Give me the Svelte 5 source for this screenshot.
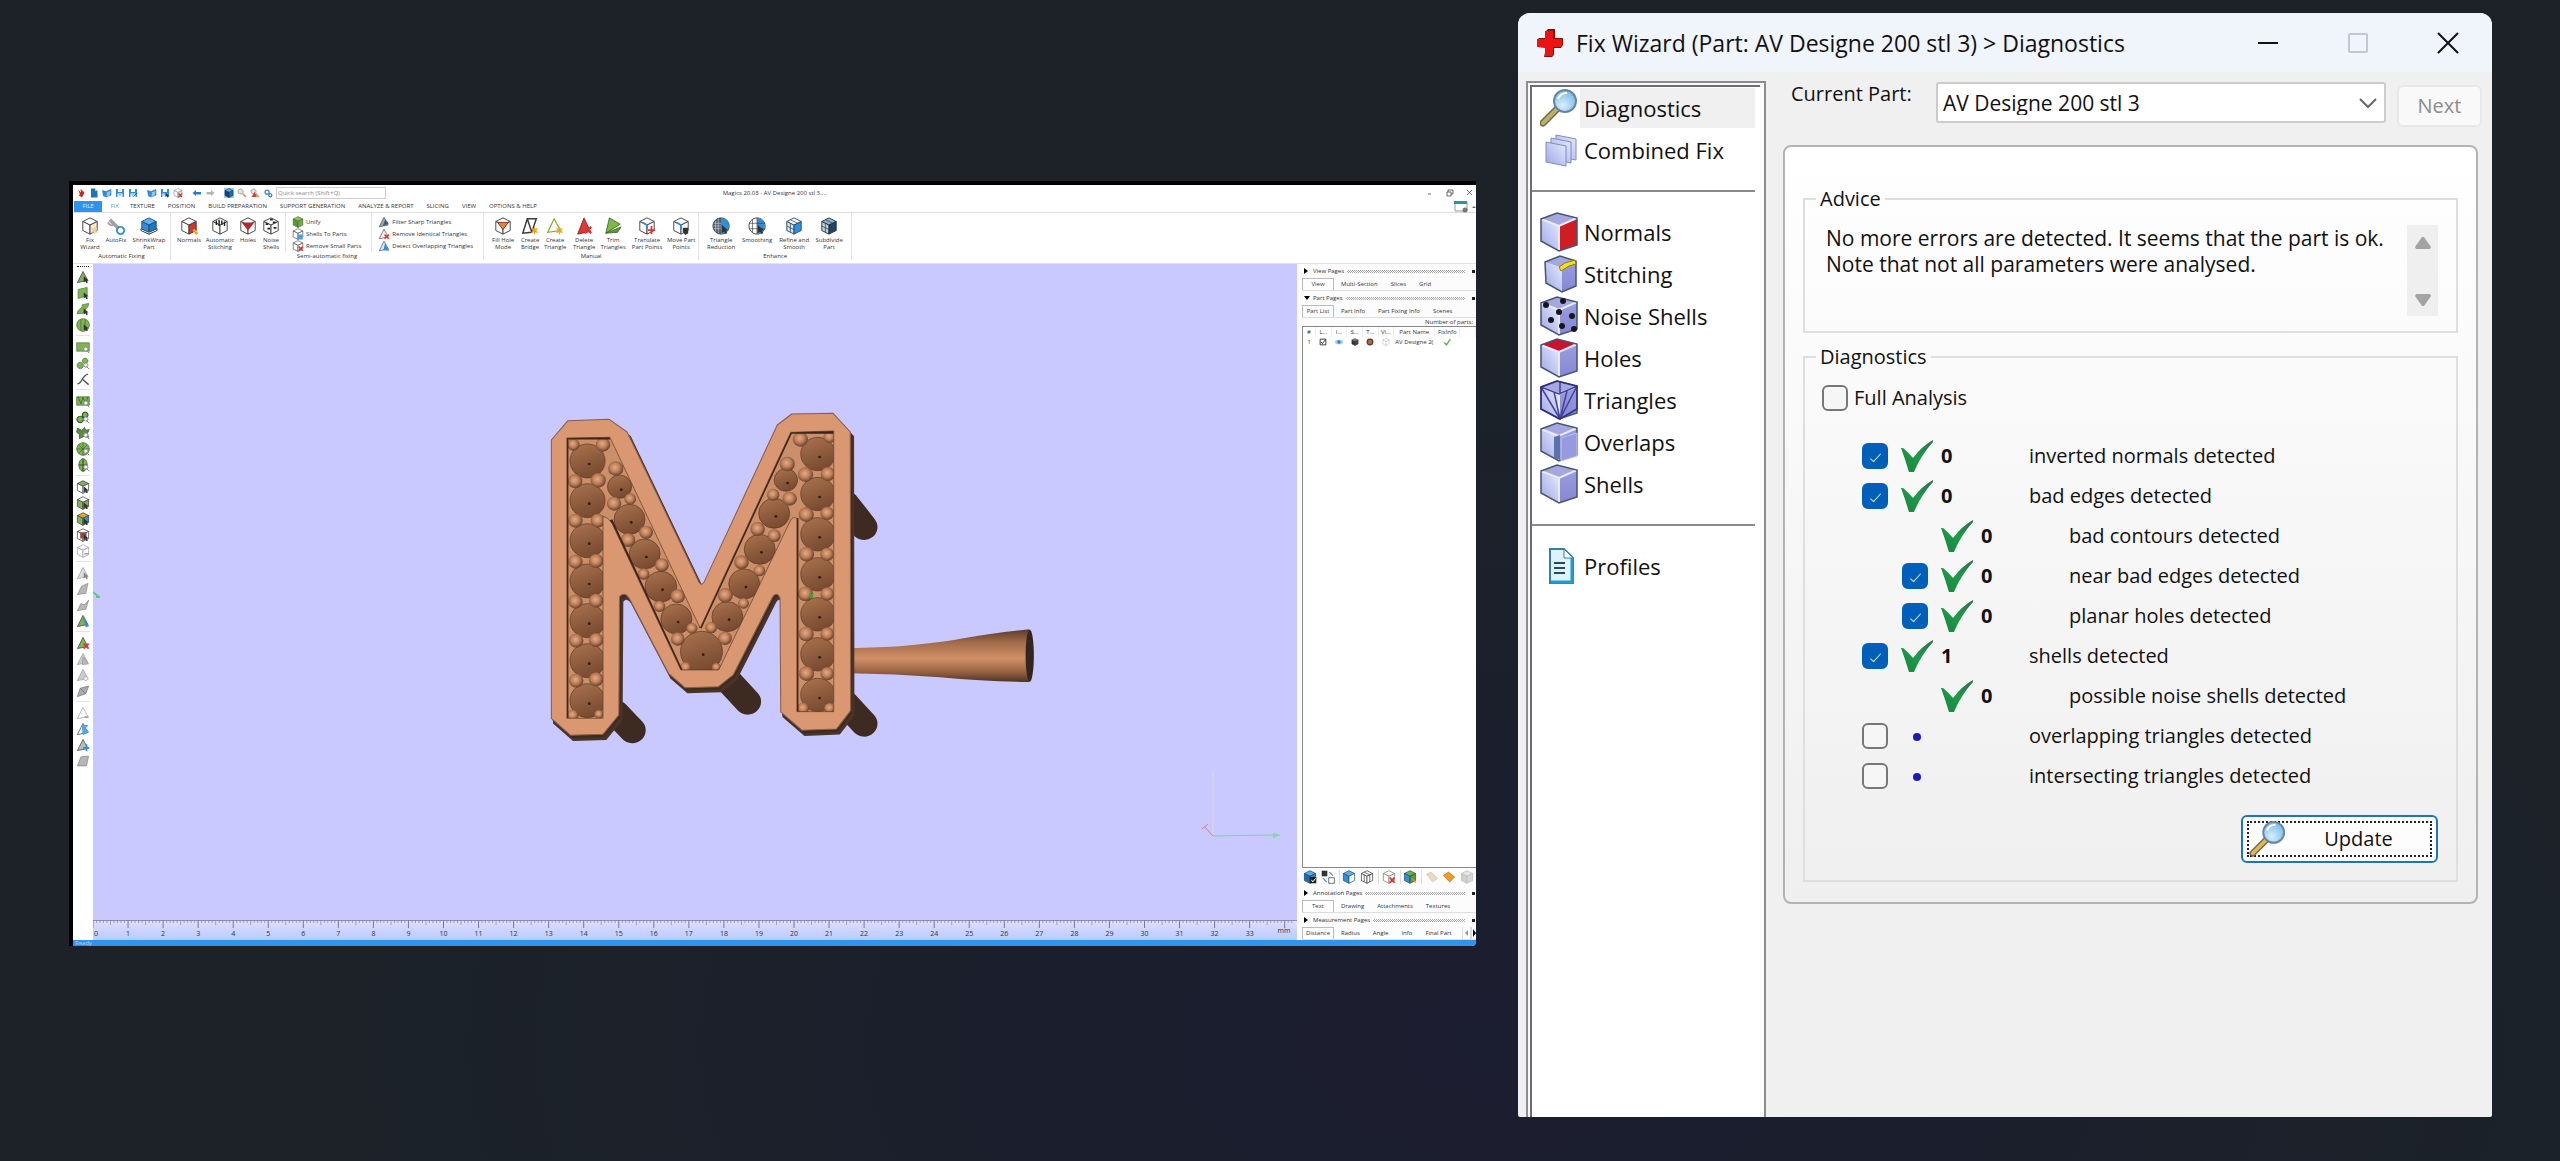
<script lang="ts">
  type Shape = { d: string; f?: string; s?: string; w?: number };
  type Icon = Shape[];

  const INK = '#3a3a3a';
  const GREEN = '#7fb356';
  const BLUE = '#2f8fdc';
  const RED = '#e0352f';
  const GREY = '#b8b8b8';

  function cube(top: string, left: string, right: string, s = INK): Icon {
    return [
      { d: 'M2 5L10 1L18 5L10 9Z', f: top, s },
      { d: 'M2 5V15L10 19V9Z', f: left, s },
      { d: 'M18 5V15L10 19V9Z', f: right, s },
    ];
  }

  function tri(f: string, s = INK): Icon {
    return [{ d: 'M10 2L2 18L17 15Z', f, s }];
  }

  const cursor: Icon = [{ d: 'M11 9V18L13.500 16L15 19L17 18L15.500 15H18Z', f: '#333' }];
  const lens: Icon = [
    { d: 'M14 10A3 3 0 1 0 14.100 10M15 15L19 19', f: '#f4f4f4', s: '#888', w: 1.4 },
  ];
  const cross: Icon = [{ d: 'M11 11L18 18M18 11L11 18', s: RED, w: 2.6 }];
  const star: Icon = [
    { d: 'M15 10L16 13L19 12L17 15L19 18L16 17L15 20L14 17L11 18L13 15L11 12L14 13Z', f: '#f2a51c' },
  ];
  const disk: Icon = [
    { d: 'M2 2H18V18H2Z', f: BLUE },
    { d: 'M6 2H14V8H6ZM5 11H15V18H5Z', f: '#fff' },
    { d: 'M7 13H13M7 15.500H13', s: BLUE },
  ];
  const folder: Icon = [
    { d: 'M1 5L8 7L18 3V14L9 18L3 16Z', f: BLUE, s: '#1b5e9c' },
    { d: 'M10 8L18 6L15 15L9 18Z', f: '#8cc6f2' },
  ];
  const magnifier: Icon = [
    { d: 'M7 2A5 5 0 1 0 7.100 2', f: '#e3e3e3', s: '#8b8b8b', w: 1.6 },
    { d: 'M11 11L18 18', s: '#c89a55', w: 3 },
  ];

  const quickIcons: { icon: Icon; gap?: boolean; on?: boolean }[] = [
    { icon: [{ d: 'M4 3L10 9L9 2L17 9L12 19L5 14L8 13Z', f: '#c62620' }] },
    {
      icon: [
        { d: 'M4 1H12L17 6V19H4Z', f: '#1d74bd' },
        { d: 'M12 1V6H17Z', f: '#a9d3f2' },
      ],
    },
    { icon: folder },
    { icon: disk },
    { icon: [...disk, { d: 'M11 17L18 10', s: '#1b5e9c', w: 2 }] },
    { icon: folder, gap: true },
    { icon: [...disk, ...cursor] },
    { icon: [...cube('#fff', '#fff', '#ddd', '#777'), ...cross] },
    { icon: [{ d: 'M1 10L8 4V8H18V13H8V16Z', f: '#2c7cc4' }], gap: true },
    { icon: [{ d: 'M19 10L12 4V8H3V13H12V16Z', f: '#b3b3b3' }] },
    { icon: [...cube('#54aeea', '#17456e', '#1f6db0', '#0f3252')], gap: true, on: true },
    { icon: magnifier },
    { icon: [...magnifier, { d: 'M3 18L9 8L14 18Z', f: '#d63b34' }] },
  ];

  const tabs = [
    'TEXTURE',
    'POSITION',
    'BUILD PREPARATION',
    'SUPPORT GENERATION',
    'ANALYZE & REPORT',
    'SLICING',
    'VIEW',
    'OPTIONS & HELP',
  ];

  type Tool = { lines: string[]; width: number; icon: Icon };

  const white = cube('#fff', '#fff', '#fff');

  const fixing: Tool[] = [
    { lines: ['Fix', 'Wizard'], width: 28, icon: [...cube('#fff', '#fff', '#f6e9cf'), ...star.map((p) => ({ ...p, f: '#e5cf9d' }))] },
    {
      lines: ['AutoFix'],
      width: 24,
      icon: [
        { d: 'M3 3L9 9L14 14', s: '#a2a2a2', w: 4 },
        { d: 'M1 6A5 5 0 0 0 9 8', s: '#a2a2a2', w: 2 },
        { d: 'M15 11A4 4 0 1 0 15.100 11', f: '#fff', s: BLUE, w: 2 },
      ],
    },
    {
      lines: ['ShrinkWrap', 'Part'],
      width: 42,
      icon: [
        ...cube('#5fb0ef', '#2f8fdc', '#1f77c2', '#1d4e7c'),
        { d: 'M1 13L10 17L19 13V15L10 19L1 15Z', f: '#fff', s: INK },
      ],
    },
  ];

  const semi: Tool[] = [
    { lines: ['Normals'], width: 34, icon: [...cube('#fff', '#fff', '#d6352c'), { d: 'M15 14L19 19', s: '#f2a51c', w: 3 }] },
    { lines: ['Automatic', 'Stitching'], width: 28, icon: [...white, { d: 'M6 4V9M9 3V10M12 4V9M15 5V10', s: '#222', w: 1.6 }] },
    { lines: ['Holes'], width: 28, icon: [...white, { d: 'M3 6L17 6L10 15Z', f: '#b8252c' }] },
    { lines: ['Noise', 'Shells'], width: 18, icon: [...white, { d: 'M4 8H7M6 13H9M12 6H15M13 12H16M9 3H12', s: '#222', w: 2 }] },
  ];

  const semiList: { text: string; icon: Icon }[] = [
    { text: 'Unify', icon: cube('#8fc05f', '#5e963c', '#74a94c', '#3f6d28') },
    { text: 'Shells To Parts', icon: [...white, { d: 'M10 11H18V19H10Z', f: '#4b9fdf' }] },
    { text: 'Remove Small Parts', icon: [...white, ...cross] },
  ];

  const filterList: { text: string; icon: Icon }[] = [
    { text: 'Filter Sharp Triangles', icon: [...tri('#9aa8b5'), { d: 'M12 6L18 12L8 17Z', f: '#3f5d78' }] },
    { text: 'Remove Identical Triangles', icon: [...tri('#f1f1f1'), ...cross] },
    { text: 'Detect Overlapping Triangles', icon: [...tri('#d9e9f6'), { d: 'M12 5L19 18L9 17Z', f: BLUE }] },
  ];

  const manual: Tool[] = [
    { lines: ['Fill Hole', 'Mode'], width: 28, icon: [...white, { d: 'M4 6L16 6L10 14Z', f: '#d98a3d', s: '#8a2a1a' }] },
    {
      lines: ['Create', 'Bridge'],
      width: 26,
      icon: [{ d: 'M2 18L7 2H17L12 17ZM7 2L12 17', f: '#fff', s: INK, w: 1.6 }, ...star],
    },
    { lines: ['Create', 'Triangle'], width: 24, icon: [{ d: 'M9 2L2 17L16 15Z', f: '#fff', s: '#8fa832', w: 1.4 }, ...star] },
    { lines: ['Delete', 'Triangle'], width: 34, icon: [{ d: 'M10 1L3 19L17 16Z', f: '#df3a34', s: '#8f1d1a' }, ...cross] },
    {
      lines: ['Trim', 'Triangles'],
      width: 24,
      icon: [
        { d: 'M6 1L18 8L2 18Z', f: '#7cb944', s: '#3f6d28' },
        { d: 'M2 18L19 11L15 17Z', f: '#5f9a33', s: '#3f6d28' },
      ],
    },
    { lines: ['Translate', 'Part Points'], width: 44, icon: [...white, { d: 'M10 9L5 6M10 9V14', s: BLUE, w: 2 }, { d: 'M15 10V19M11 14.500H19', s: RED, w: 2 }] },
    { lines: ['Move Part', 'Points'], width: 24, icon: [...white, { d: 'M10 9L5 6M10 9V14', s: BLUE, w: 2 }, { d: 'M12 12H18V18L15 20L12 17Z', f: '#333' }] },
  ];

  const disc = 'M10 1A9 9 0 1 0 10.100 1';
  const enhance: Tool[] = [
    {
      lines: ['Triangle', 'Reduction'],
      width: 34,
      icon: [
        { d: disc, f: '#4d5f70', s: INK },
        { d: 'M10 1A9 9 0 0 1 10 19Z', f: BLUE },
        { d: 'M4 4V16M7 2V18M2 7H10M1 10H10M2 13H10', s: '#c9d3dc', w: 0.7 },
        ...cursor,
      ],
    },
    {
      lines: ['Smoothing'],
      width: 38,
      icon: [
        { d: disc, f: '#fff', s: INK },
        { d: 'M10 1A9 9 0 0 1 10 19Z', f: BLUE },
        { d: 'M5 3V17M1 7H19M1 13H19M10 1V19', s: INK, w: 0.7 },
        ...cursor,
      ],
    },
    { lines: ['Refine and', 'Smooth'], width: 36, icon: [...cube('#fff', '#cfe5f7', BLUE, '#234a6b'), { d: 'M2 10L10 14M6 7V17M6 3L14 7', s: INK, w: 0.8 }] },
    { lines: ['Subdivide', 'Part'], width: 34, icon: [...cube('#8fb2cf', '#c3cfd9', '#1f4467', '#1b2f42'), { d: 'M2 10L10 14M6 7V17M6 3L14 7', s: INK, w: 0.8 }] },
  ];

  // marking tools down the left edge, in blocks split by a rule
  const sideTools: Icon[][] = [
    [
      [...tri(GREEN), ...cursor],
      [{ d: 'M3 5L16 2V14L3 18Z', f: GREEN, s: '#4d7a30' }, ...cursor],
      [{ d: 'M2 17C2 9 9 11 9 4L18 2C18 10 11 9 11 16Z', f: GREEN, s: '#4d7a30' }, ...cursor],
      [{ d: disc, f: GREEN, s: '#3f6d28' }, { d: 'M7 2V18M13 2V18', s: '#3f6d28' }, ...cursor],
    ],
    [
      [{ d: 'M1 4H19V16H1Z', f: GREEN, s: '#4d7a30' }, ...lens],
      [{ d: 'M6 9A4.500 4.500 0 1 0 6.100 9M13 3A4 4 0 1 0 13.100 3', f: GREEN, s: '#4d7a30' }, ...lens],
      [{ d: 'M2 17C9 17 8 5 17 3M10 11L18 18', s: '#4a5844', w: 2 }],
    ],
    [
      [{ d: 'M1 4H19V16H1Z', f: GREEN, s: '#3f6d28' }, { d: 'M3 4L7 14L10 5L14 14L17 4', s: '#31571f' }, ...lens],
      [{ d: 'M6 9A4.500 4.500 0 1 0 6.100 9M13 3A4 4 0 1 0 13.100 3', f: GREEN, s: '#31571f', w: 1.6 }, ...lens],
      [{ d: 'M2 3L8 6L12 2L14 6L19 5L16 11L18 16L11 15L5 18L5 12L1 9Z', f: '#5f8a42', s: '#31571f' }, ...lens],
      [{ d: disc, f: GREEN, s: '#3f6d28' }, { d: 'M10 1V19M1 10H19M4 4L16 16M16 4L4 16', s: '#3f6d28' }, ...lens],
      [{ d: 'M10 1A6 9 0 1 0 10.100 1', f: GREEN, s: '#31571f' }, { d: 'M10 1V19M4 10H16', s: '#31571f', w: 1.6 }, ...lens],
    ],
    [
      [...cube(GREEN, '#fff', '#fff'), ...cursor],
      [...cube('#fff', GREEN, GREEN), ...cursor],
      [...cube('#f2a51c', GREEN, BLUE), ...cursor],
      [...white, { d: 'M6 6H15V15H6Z', f: '#8f4a42' }, ...cursor],
      [...cube('#fff', '#fff', '#fff', '#999'), { d: 'M12 14H18', s: '#999', w: 2 }],
    ],
    [
      [...tri('#ddd', '#999'), ...cursor.map((p) => ({ ...p, f: '#888' }))],
      [{ d: 'M2 18L8 6L17 2L14 16Z', f: GREY, s: '#888' }],
      [{ d: 'M2 18L7 8L12 10L18 3L14 16Z', f: GREY, s: '#888' }],
      [...tri(GREEN), { d: 'M9 3L16 14L19 17L14 19Z', f: BLUE }],
    ],
    [
      [...tri(GREEN), ...cross],
      [...tri('#ccc', '#999'), { d: 'M10 7L18 17L9 18Z', f: GREY, s: '#999' }],
      [...tri('#ccc', '#999'), { d: 'M14 12A3 3 0 1 0 14.100 12', f: '#eee', s: '#999' }],
      [{ d: 'M2 18L6 6L18 3L14 14Z', f: '#aaa', s: '#777' }, { d: 'M6 6L14 14', s: '#777' }],
    ],
    [
      [...tri('#fff', '#999'), { d: 'M12 16H18', s: '#999', w: 2 }],
      [...tri('#fff'), { d: 'M9 5H17L13 9L18 14L10 18Z', f: '#5aa9e3', s: BLUE }],
      [...tri('#bbb'), { d: 'M15 9V19M10 14H19', s: BLUE, w: 2.4 }],
      [{ d: 'M2 17L7 4L18 3L15 17Z', f: '#b5b5b5', s: '#888' }],
    ],
  ];

  const sceneIcons: { icon: Icon; rule?: boolean }[] = [
    { icon: [...cube('#54aeea', '#1f6db0', '#2a82ca', '#17456e'), { d: 'M10 10H19V19H10Z', f: '#222' }, { d: 'M12 14L14 17L18 12', s: '#fff', w: 1.4 }] },
    { icon: [{ d: 'M1 1H9V9H1Z', f: '#333' }, { d: 'M11 11H19V19H11Z', f: '#fff', s: INK }, { d: 'M12 3L17 8M3 12L8 17', s: BLUE, w: 1.6 }], rule: true },
    { icon: [...cube('#5fb0ef', '#2f8fdc', '#fff', '#234a6b')] },
    { icon: [...white, { d: 'M6 3L14 7V17M6 7V17', s: INK }], rule: true },
    { icon: [...cube('#fff', '#fff', '#fff', '#777'), ...cross], rule: true },
    { icon: [...cube('#6ab04a', '#2f8fdc', '#5f9a33', '#234a6b'), { d: 'M13 12L18 18', s: '#e58f22', w: 2 }], rule: true },
    { icon: [{ d: 'M2 6L9 3L18 12L11 17Z', f: '#eadbc0', s: '#d8c5a2' }] },
    { icon: [{ d: 'M2 8L9 3L18 10L11 17Z', f: '#f39a26', s: '#b96e11' }] },
    { icon: cube('#e4e4e4', '#cfcfcf', '#d8d8d8', '#bbb') },
  ];

  // [cx, cy, r]
  type Ball = [number, number, number];

  const domes: Ball[] = [
    ...[213, 332, 452, 573, 692, 812, 932].map((y): Ball => [167, y, 51]),
    ...[192, 312, 433, 553, 673, 793, 915].map((y): Ball => [836, y, 50]),
    [260, 290, 35], [289, 388, 45], [333, 492, 45], [380, 590, 46], [425, 687, 45], [498, 785, 61],
    [743, 270, 34], [709, 370, 45], [667, 478, 45], [622, 582, 45], [573, 680, 45],
  ];

  const beads: Ball[] = [
    [126, 164, 18], [212, 164, 21], [131, 274, 21], [198, 271, 22], [132, 392, 21], [197, 392, 21],
    [132, 515, 21], [192, 513, 21], [132, 635, 21], [192, 632, 21], [134, 752, 21], [192, 750, 21],
    [134, 872, 21], [192, 868, 21], [124, 976, 17], [200, 973, 13],
    [785, 148, 22], [870, 141, 18], [800, 254, 22], [865, 252, 21], [802, 374, 22], [863, 370, 20],
    [803, 493, 22], [863, 493, 20], [800, 612, 22], [863, 612, 20], [802, 732, 22], [863, 732, 20],
    [803, 851, 22], [863, 851, 20], [793, 955, 17], [870, 955, 16],
    [249, 236, 22], [244, 341, 21], [291, 327, 17], [285, 450, 21], [337, 427, 20], [330, 552, 17],
    [383, 525, 20], [376, 649, 17], [429, 619, 21], [429, 747, 20], [470, 715, 16], [452, 832, 16], [541, 832, 13],
    [747, 222, 22], [706, 314, 18], [754, 326, 21], [661, 417, 21], [709, 437, 19], [614, 517, 21],
    [666, 542, 17], [567, 616, 22], [620, 640, 16], [526, 713, 17], [566, 745, 20],
  ];

  const bodyPath =
    'M62 150L110 92L230 88L282 126L490 575Q497 590 506 575L718 105L760 72L880 70L930 126L931 962L890 1017L790 1021L728 966L726 625Q718 603 705 620L590 855L547 890L450 893L402 850L288 625Q275 603 260 620L258 975L212 1033L118 1036L62 985Z';
  const pocketPath =
    'M107 144L232 142L494 714L757 127L882 123V965H775V385Q765 378 757 390L548 840H438L238 400Q225 380 212 380V985H107Z';

  const ticks = Array.from({ length: 343 }, (_, i) => i);
  const unit = 35.05;

  const navItems: { label: string; kind: string; rule?: boolean }[] = [
    { label: 'Diagnostics', kind: 'lens' },
    { label: 'Combined Fix', kind: 'stack', rule: true },
    { label: 'Normals', kind: 'normals' },
    { label: 'Stitching', kind: 'stitching' },
    { label: 'Noise Shells', kind: 'noise' },
    { label: 'Holes', kind: 'holes' },
    { label: 'Triangles', kind: 'triangles' },
    { label: 'Overlaps', kind: 'overlaps' },
    { label: 'Shells', kind: 'shells', rule: true },
    { label: 'Profiles', kind: 'profiles' },
  ];

  type Check = { id: string; label: string; count?: number; checked?: boolean; nested?: boolean };

  const checks: Check[] = $state([
    { id: 'inverted', label: 'inverted normals detected', count: 0, checked: true },
    { id: 'bad-edges', label: 'bad edges detected', count: 0, checked: true },
    { id: 'bad-contours', label: 'bad contours detected', count: 0, nested: true },
    { id: 'near-bad', label: 'near bad edges detected', count: 0, checked: true, nested: true },
    { id: 'planar', label: 'planar holes detected', count: 0, checked: true, nested: true },
    { id: 'shells', label: 'shells detected', count: 1, checked: true },
    { id: 'noise', label: 'possible noise shells detected', count: 0, nested: true },
    { id: 'overlapping', label: 'overlapping triangles detected', checked: false },
    { id: 'intersecting', label: 'intersecting triangles detected', checked: false },
  ]);

  let activeNav = $state('Diagnostics');
  let fullAnalysis = $state(false);
</script>

{#snippet glyph(icon: Icon, cls: string)}
  <svg class={cls} viewBox="0 0 20 20" aria-hidden="true">
    {#each icon as p}
      <path d={p.d} fill={p.f ?? 'none'} stroke={p.s ?? 'none'} stroke-width={p.w ?? 1} />
    {/each}
  </svg>
{/snippet}

{#snippet toolButton(tool: Tool)}
  <button class="tool" style="width: {tool.width}px">
    {@render glyph(tool.icon, 'tool-icon')}
    {#each tool.lines as line}
      <span>{line}</span>
    {/each}
  </button>
{/snippet}

{#snippet toolList(list: { text: string; icon: Icon }[])}
  <div class="tool-list">
    {#each list as item}
      <button>{@render glyph(item.icon, 'list-icon')}{item.text}</button>
    {/each}
  </div>
{/snippet}

{#snippet pageHead(title: string, open: boolean)}
  <div class="page-head">
    <span class="arrow" class:open></span>
    <span>{title}</span>
    <span class="grip"></span>
    <span class="dot"></span>
  </div>
{/snippet}

{#snippet pageTabs(names: string[], scroll: boolean)}
  <div class="page-tabs">
    {#each names as name, i}
      <button class:current={i === 0}>{name}</button>
    {/each}
    {#if scroll}
      <svg class="tab-scroll" viewBox="0 0 14 12" aria-hidden="true">
        <path d="M0 0V12M9 0V12" stroke="#bbb" />
        <path d="M6 3V9L3 6Z" fill="#999" />
        <path d="M11 2V10L14 6Z" fill="#000" />
      </svg>
    {/if}
  </div>
{/snippet}

{#snippet lensIcon(handle: string)}
  <path d="M3 35L18 20" stroke="#6f6a4a" stroke-width="7" stroke-linecap="round" />
  <path d="M3 35L18 20" stroke={handle} stroke-width="4" stroke-linecap="round" />
  <circle cx="25" cy="13" r="11" fill="url(#glass)" stroke="#6487a8" stroke-width="2" />
  <path d="M18 11Q20 5 27 5" stroke="#fff" stroke-width="2" fill="none" />
{/snippet}

<svg class="defs" aria-hidden="true">
  <defs>
    <radialGradient id="glass" cx="0.4" cy="0.7" r="0.8">
      <stop offset="0" stop-color="#d8effc" />
      <stop offset="1" stop-color="#6fb2e6" />
    </radialGradient>
    <linearGradient id="face" x1="0" y1="1" x2="1" y2="0">
      <stop offset="0" stop-color="#9ea6e4" />
      <stop offset="1" stop-color="#e6ebff" />
    </linearGradient>
    <linearGradient id="side" x1="0" y1="0" x2="0" y2="1">
      <stop offset="0" stop-color="#9a9ddf" />
      <stop offset="1" stop-color="#8587d2" />
    </linearGradient>
    <radialGradient id="bead" cx="0.45" cy="0.42" r="0.6">
      <stop offset="0" stop-color="#e6aa83" />
      <stop offset="0.5" stop-color="#bf815b" />
      <stop offset="1" stop-color="#5f3c29" />
    </radialGradient>
    <linearGradient id="dome" x1="0.2" y1="0" x2="0.6" y2="1">
      <stop offset="0" stop-color="#a8714c" />
      <stop offset="0.5" stop-color="#8f5d3e" />
      <stop offset="1" stop-color="#77492f" />
    </linearGradient>
    <linearGradient id="handle" x1="0" y1="0" x2="0" y2="1">
      <stop offset="0" stop-color="#5b3b29" />
      <stop offset="0.25" stop-color="#a26b49" />
      <stop offset="0.55" stop-color="#d08f67" />
      <stop offset="0.8" stop-color="#9a6443" />
      <stop offset="1" stop-color="#4e3224" />
    </linearGradient>
    <linearGradient id="ruler" x1="0" y1="0" x2="0" y2="1">
      <stop offset="0" stop-color="#e4dcff" />
      <stop offset="1" stop-color="#b6ccff" />
    </linearGradient>
    <linearGradient id="tick" x1="1" y1="0" x2="0" y2="1">
      <stop offset="0" stop-color="#2b6e4c" />
      <stop offset="0.5" stop-color="#1f9a4a" />
      <stop offset="1" stop-color="#18843c" />
    </linearGradient>
    <clipPath id="pocket"><path d={pocketPath} /></clipPath>
  </defs>
</svg>

<main class="desk">
  <section class="magics" aria-label="Magics">
    <header class="titlebar">
      <div class="quick">
        {#each quickIcons as q}
          <button class:gap={q.gap} class:on={q.on} aria-label="Quick action">{@render glyph(q.icon, 'quick-icon')}</button>
        {/each}
        <svg class="quick-gear" viewBox="0 0 20 20" aria-hidden="true">
          <circle cx="7" cy="7" r="4.500" fill="none" stroke="#2f8fdc" stroke-width="3" />
          <circle cx="14" cy="14" r="3.500" fill="none" stroke="#2c6ca8" stroke-width="2.500" />
        </svg>
        <input class="search" type="text" placeholder="Quick search (Shift+Q)" aria-label="Quick search" />
      </div>
      <div class="app-title">Magics 20.03 - AV Designe 200 stl 3....</div>
      <div class="app-controls">
        <svg viewBox="0 0 46 8" aria-hidden="true">
          <path d="M1 5H4M20 3H24V7H20ZM21 3V1H26V5H24M40 1L45 6M45 1L40 6" fill="none" stroke="#444" stroke-width="0.800" />
        </svg>
      </div>
    </header>

    <nav class="tabs">
      <button class="file">FILE</button>
      <button class="active">FIX</button>
      {#each tabs as tab}
        <button>{tab}</button>
      {/each}
      <svg class="tabs-help" viewBox="0 0 22 12" aria-hidden="true">
        <path d="M1 1H13V10H1Z" fill="#fff" stroke="#9a9a9a" />
        <path d="M0 0H13V3H0Z" fill="#2c93a5" />
        <circle cx="11" cy="9" r="2.500" fill="#777" />
        <path d="M18 7L20 5L22 7Z" fill="#666" />
      </svg>
    </nav>

    <div class="ribbon">
      <div class="group">
        <div class="group-tools lead">
          {#each fixing as tool}{@render toolButton(tool)}{/each}
        </div>
        <div class="caption">Automatic Fixing</div>
      </div>
      <div class="group">
        <div class="group-tools">
          <div class="semi-tools">
            {#each semi as tool}{@render toolButton(tool)}{/each}
          </div>
          {@render toolList(semiList)}
          {@render toolList(filterList)}
        </div>
        <div class="caption">Semi-automatic fixing</div>
      </div>
      <div class="group">
        <div class="group-tools padded">
          {#each manual as tool}{@render toolButton(tool)}{/each}
        </div>
        <div class="caption">Manual</div>
      </div>
      <div class="group">
        <div class="group-tools padded">
          {#each enhance as tool}{@render toolButton(tool)}{/each}
        </div>
        <div class="caption">Enhance</div>
      </div>
    </div>

    <div class="workspace">
      <div class="side-tools">
        <span class="side-grip"></span>
        {#each sideTools as block}
          <div class="side-block">
            {#each block as icon}
              <button aria-label="Marking tool">{@render glyph(icon, 'side-icon')}</button>
            {/each}
          </div>
        {/each}
      </div>

      <div class="stage">
        <svg class="scene" viewBox="0 0 1204 656" role="img" aria-label="Part view">
          <rect width="1204" height="656" fill="#c9c8ff" />
          <g transform="translate(437 126) scale(0.3444 0.3333)">
            <g stroke="#3d2a20" stroke-width="78" stroke-linecap="round">
              <path d="M250 970L297 1021" />
              <path d="M565 860L632 935" />
              <path d="M920 345L970 411" />
              <path d="M915 940L970 1001" />
            </g>
            <path d="M930 775L1050 770Q1180 760 1250 746Q1360 727 1450 718V876Q1330 875 1190 862Q1060 852 930 850Z" fill="url(#handle)" />
            <ellipse cx="1451" cy="797" rx="12" ry="78" fill="#35251f" />
            <path d={bodyPath} fill="#49342a" stroke="#49342a" stroke-width="6" transform="translate(8 14)" />
            <path d={bodyPath} fill="#3d2b22" transform="translate(4 8)" />
            <path d={bodyPath} fill="#d99871" stroke="#8a5d45" stroke-width="3" stroke-linejoin="round" />
            <path d={pocketPath} fill="#cb8f69" />
            <g clip-path="url(#pocket)">
              {#each domes as [cx, cy, r]}
                <circle {cx} {cy} {r} fill="url(#dome)" stroke="#5c3a27" stroke-width="2" />
                <circle cx={cx + 5} cy={cy + 9} r="4" fill="#2f1c12" />
              {/each}
              {#each beads as [cx, cy, r]}
                <circle {cx} {cy} {r} fill="url(#bead)" />
              {/each}
              <path d="M107 985V144H232M494 714L757 127H882M775 965V385M438 840L235 390" fill="none" stroke="#3a251a" stroke-width="9" />
            </g>
            <path d={pocketPath} fill="none" stroke="#5c3a27" stroke-width="2" />
            <path d="M811 612L823 622M822 610L814 625" stroke="#2fae2f" stroke-width="4" />
          </g>
          <path d="M1120 572V506" stroke="#dcdccb" />
          <path d="M1120 572L1182 571" stroke="#7fd0a4" />
          <path d="M1120 572L1111 562M1109 565L1115 560" stroke="#dd7f8a" />
          <path d="M1180 569L1188 571L1180 574Z" fill="#7ddba0" />
          <path d="M0 328L6 333M3 333H7" stroke="#5fc98f" stroke-width="2" />
        </svg>
        <svg class="ruler" viewBox="0 0 1204 20" aria-label="Ruler">
          <rect width="1204" height="20" fill="url(#ruler)" />
          <path d="M0 0.500H1204" stroke="#8f8fb0" />
          {#each ticks as i}
            <path
              d="M{(i * unit) / 10} 0V{i % 10 === 0 ? 8 : i % 5 === 0 ? 5 : 3}"
              stroke="#77779a"
              stroke-width={i % 10 === 0 ? 1 : 0.6}
            />
          {/each}
          {#each { length: 34 } as _, n}
            <text x={n === 0 ? 3 : n * unit} y="16">{n}</text>
          {/each}
          <text x="1191" y="13">mm</text>
        </svg>
      </div>

      <aside class="pages">
        {@render pageHead('View Pages', false)}
        {@render pageTabs(['View', 'Multi-Section', 'Slices', 'Grid'], false)}
        {@render pageHead('Part Pages', true)}
        {@render pageTabs(['Part List', 'Part Info', 'Part Fixing Info', 'Scenes'], false)}
        <div class="part-total">Number of parts:</div>
        <div class="part-list">
          <table>
            <thead>
              <tr>
                <th class="narrow">#</th>
                <th>L...</th>
                <th>I...</th>
                <th>S...</th>
                <th>T...</th>
                <th>Vi...</th>
                <th class="wide">Part Name</th>
                <th class="info">FixInfo</th>
                <th></th>
              </tr>
            </thead>
            <tbody>
              <tr>
                <td class="narrow">1</td>
                <td>
                  <svg class="cell-icon" viewBox="0 0 14 14"><path d="M2 2H12V12H2Z" fill="#fff" stroke="#222" stroke-width="1.500" /><path d="M4 7L6 10L11 3" fill="none" stroke="#222" stroke-width="1.500" /></svg>
                </td>
                <td>
                  <svg class="cell-icon" viewBox="0 0 14 14"><ellipse cx="7" cy="7" rx="7" ry="4" fill="#9cd2f5" /><circle cx="7" cy="7" r="3" fill="#2b87cf" /></svg>
                </td>
                <td>{@render glyph(cube('#777', '#333', '#444'), 'cell-icon')}</td>
                <td>
                  <svg class="cell-icon" viewBox="0 0 14 14"><circle cx="7" cy="7" r="5" fill="#b06a3f" stroke="#5b3521" stroke-width="2" /></svg>
                </td>
                <td>{@render glyph(cube('#fff', '#fff', '#fff', '#aaa'), 'cell-icon')}</td>
                <td class="wide">AV Designe 2(</td>
                <td class="info">
                  <svg class="cell-icon" viewBox="0 0 14 14"><path d="M2 8L6 12L13 2" fill="none" stroke="#6ab04a" stroke-width="2.500" /></svg>
                </td>
                <td></td>
              </tr>
            </tbody>
          </table>
        </div>
        <div class="scene-tools">
          {#each sceneIcons as item}
            <button class:rule={item.rule} aria-label="Part action">{@render glyph(item.icon, 'scene-icon')}</button>
          {/each}
        </div>
        {@render pageHead('Annotation Pages', false)}
        {@render pageTabs(['Text', 'Drawing', 'Attachments', 'Textures'], false)}
        {@render pageHead('Measurement Pages', false)}
        {@render pageTabs(['Distance', 'Radius', 'Angle', 'Info', 'Final Part'], true)}
      </aside>
    </div>
    <footer class="status">Ready</footer>
  </section>

  <section class="wizard" aria-label="Fix Wizard">
    <header class="wizard-title">
      <svg class="plus" viewBox="0 0 28 28" aria-hidden="true">
        <path d="M10 2L12 0H19V9H27V16L25 19H18V26L16 28H8L10 19L1 18V11L3 9H10Z" fill="#8e0c0c" />
        <path d="M9 2H17V10H26V18H17V27H9V18H1V10H9Z" fill="#ec1313" />
      </svg>
      <h1>Fix Wizard (Part: AV Designe 200 stl 3) &gt; Diagnostics</h1>
      <div class="wizard-controls">
        <button aria-label="Minimize"><svg viewBox="0 0 22 22"><path d="M1 11H21" stroke="#111" stroke-width="2" /></svg></button>
        <button aria-label="Maximize" disabled><svg viewBox="0 0 22 22"><rect x="2" y="2" width="18" height="18" rx="1" fill="none" stroke="#c3c7cf" stroke-width="2" /></svg></button>
        <button aria-label="Close"><svg viewBox="0 0 22 22"><path d="M1 1L21 21M21 1L1 21" stroke="#111" stroke-width="2" /></svg></button>
      </div>
    </header>

    <div class="wizard-body">
      <nav class="wizard-nav">
        <div class="nav-inner">
          {#each navItems as item}
            <button class:selected={activeNav === item.label} onclick={() => (activeNav = item.label)}>
              <svg viewBox="0 0 38 40" fill="none" aria-hidden="true">
                {#if item.kind === 'lens'}
                  {@render lensIcon('#b9b06a')}
                {:else if item.kind === 'stack'}
                  <g fill="url(#face)" stroke="#7f8dbd" stroke-linejoin="round">
                    <path d="M16 5L36 9V30L16 26Z" />
                    <path d="M11 8L31 12V33L11 29Z" />
                    <path d="M6 12L26 16V36L6 32Z" />
                  </g>
                {:else if item.kind === 'profiles'}
                  <path d="M10 3H24L33 12V37H10Z" fill="#dff3fd" stroke="#2b83ab" stroke-width="2" />
                  <path d="M24 3V12H33Z" fill="#fff" stroke="#2b83ab" />
                  <path d="M32 12V36H11" stroke="#1f9ecb" stroke-width="3" />
                  <path d="M14 17H25M14 22H25M14 27H25" stroke="#244a66" stroke-width="2" />
                {:else if item.kind === 'stitching'}
                  <path d="M5 8L20 2L36 7L22 14Z" fill="#a5a7de" />
                  <path d="M5 8L22 14V38L6 29Z" fill="url(#face)" />
                  <path d="M22 14L36 7V32L22 38Z" fill="url(#side)" />
                  <path d="M5 8L20 2L36 7V32L22 38L6 29Z" stroke="#46566e" stroke-width="1.500" />
                  <path d="M19 13L25 9L35 6L36 10L29 12L21 17Z" fill="#f3e019" stroke="#8a7a10" />
                {:else}
                  <path d="M1 7L17 1L37 6L19 14Z" fill={item.kind === 'holes' ? '#c9142c' : '#a5a7de'} />
                  <path d="M1 7L19 14V39L1 29Z" fill="url(#face)" />
                  <path d="M19 14L37 6V33L19 39Z" fill={item.kind === 'normals' ? '#cf1d22' : 'url(#side)'} />
                  <path d="M1 7L19 14L37 6M19 14V38" stroke="#e9ebff" stroke-width="2" />
                  <path d="M1 7L17 1L37 6V33L19 39L1 29Z" stroke="#46566e" stroke-width="1.500" />
                  {#if item.kind === 'noise'}
                    <g fill="#15161d">
                      <circle cx="6" cy="9" r="3" /><circle cx="23" cy="5" r="3" /><circle cx="19" cy="16" r="3" />
                      <circle cx="11" cy="24" r="3" /><circle cx="32" cy="20" r="3" /><circle cx="22" cy="30" r="3" /><circle cx="34" cy="33" r="3" />
                    </g>
                  {:else if item.kind === 'triangles'}
                    <path d="M1 7L20 39L37 6M20 39L14 12M20 39L27 11M20 1V14M1 7L19 14L37 6" stroke="#43409a" stroke-width="1.500" />
                    <path d="M1 7L17 1L37 6V29L20 39L1 29Z" stroke="#2f2c85" stroke-width="1.500" />
                  {:else if item.kind === 'overlaps'}
                    <path d="M14 15L20 13V38L14 36Z" fill="#5b73a8" />
                    <path d="M21 16L37 11V34L21 39Z" fill="#979ade" stroke="#b9c5ec" />
                  {/if}
                {/if}
              </svg>
              <span>{item.label}</span>
            </button>
            {#if item.rule}<hr />{/if}
          {/each}
        </div>
      </nav>

      <div class="wizard-main">
        <div class="part-row">
          <label for="part">Current Part:</label>
          <div class="select-wrap">
            <select id="part"><option>AV Designe 200 stl 3</option></select>
            <svg viewBox="0 0 18 10" aria-hidden="true"><path d="M1 1L9 9L17 1" fill="none" stroke="#666" stroke-width="2" /></svg>
          </div>
          <button class="next" disabled>Next</button>
        </div>

        <div class="panel">
          <fieldset class="advice">
            <legend>Advice</legend>
            <p>No more errors are detected. It seems that the part is ok.<br />Note that not all parameters were analysed.</p>
            <div class="scroll">
              <svg viewBox="0 0 16 14"><path d="M7 1H9L16 11L15 13H1L0 11Z" fill="#a3a3a3" /></svg>
              <svg viewBox="0 0 16 14"><path d="M7 13H9L16 3L15 1H1L0 3Z" fill="#a3a3a3" /></svg>
            </div>
          </fieldset>

          <fieldset class="diagnostics">
            <legend>Diagnostics</legend>
            <label class="full"><input type="checkbox" bind:checked={fullAnalysis} />Full Analysis</label>
            <div class="checks">
              {#each checks as check}
                <div class="check" class:nested={check.nested}>
                  {#if check.checked != null}
                    <input type="checkbox" id={check.id} bind:checked={check.checked} />
                  {:else}
                    <span class="no-box"></span>
                  {/if}
                  <svg viewBox="0 0 32 34" aria-hidden="true">
                    {#if check.count != null}
                      <path d="M0 9L2 9Q8 14 12 19Q21 7 32 1V3Q20 16 13 33H8Q4 20 0 9Z" fill="url(#tick)" />
                    {:else}
                      <circle cx="16" cy="18" r="4" fill="#1b1bb8" />
                    {/if}
                  </svg>
                  <b>{check.count ?? ''}</b>
                  {#if check.checked != null}
                    <label for={check.id}>{check.label}</label>
                  {:else}
                    <span>{check.label}</span>
                  {/if}
                </div>
              {/each}
            </div>
            <button class="update">
              <span class="focus">
                <svg viewBox="0 0 38 40" fill="none" aria-hidden="true">{@render lensIcon('#e3b35a')}</svg>
                <span>Update</span>
              </span>
            </button>
          </fieldset>
        </div>
      </div>
    </div>
  </section>
</main>

<style>
  :global(body) {
    background: #1c2127;
  }

  .desk {
    --ui: 'Open Sans', 'Noto Sans', sans-serif;
    box-sizing: border-box;
    display: grid;
    grid-template-columns: 1403fr 974fr;
    gap: 42px;
    min-height: 100vh;
    padding: 13px 68px 44px 73px;
    font-family: var(--ui);
    color: #111;
    background:
      radial-gradient(ellipse 45% 60% at 58% 90%, #1b1d30, transparent),
      linear-gradient(#1c2228, #1c2228);
  }

  .defs {
    position: absolute;
    width: 0;
    height: 0;
  }

  button,
  input,
  select {
    font: inherit;
    color: inherit;
  }

  button {
    padding: 0;
    border: 0;
    background: none;
    white-space: nowrap;
  }

  /* Magics main window */

  .magics {
    display: flex;
    flex-direction: column;
    align-self: start;
    min-width: 0;
    margin-top: 172px;
    border-radius: 0 0 4px 0;
    background: #fff;
    box-shadow: -2px -2px 0 2px #000;
    clip-path: inset(-4px 0 0 -4px round 0 0 4px 0);
    font-size: 6px;
    line-height: 7px;
    color: #333;
  }

  .titlebar {
    display: grid;
    grid-template-columns: 1fr auto 1fr;
    align-items: center;
    height: 16px;
  }

  .quick {
    display: flex;
    align-items: center;
    gap: 3px;
    padding-left: 3px;
  }

  .quick button {
    display: flex;
  }

  .quick .gap {
    margin-left: 6px;
  }

  .quick .on {
    background: #9fcbee;
  }

  .quick-icon {
    width: 10px;
    height: 10px;
  }

  .quick-gear {
    width: 9px;
    height: 9px;
    margin-left: 1px;
  }

  .search {
    box-sizing: border-box;
    width: 110px;
    height: 12px;
    padding: 0 1px;
    border: 1px solid #ccc;
    background: #fff;
  }

  .search::placeholder {
    color: #888;
  }

  .app-controls {
    display: flex;
    justify-content: flex-end;
    padding-right: 3px;
  }

  .app-controls svg {
    width: 46px;
    height: 8px;
  }

  .tabs {
    box-sizing: border-box;
    display: flex;
    align-items: center;
    height: 12px;
    gap: 13px;
    padding-left: 1px;
    border-bottom: 1px solid #ddd;
  }

  .tabs button {
    height: 11px;
  }

  .tabs .file {
    width: 28px;
    background: #2f93ee;
    color: #dcefff;
  }

  .tabs .active {
    width: 25px;
    margin: 0 -13px;
    color: #4b9fdf;
  }

  .tabs .active + button {
    margin-left: 3px;
  }

  .tabs-help {
    width: 22px;
    height: 12px;
    margin-left: auto;
  }

  .ribbon {
    box-sizing: border-box;
    display: flex;
    height: 51px;
    border-bottom: 1px solid #e2e2e2;
  }

  .group {
    display: flex;
    flex-direction: column;
    justify-content: space-between;
    margin-bottom: 3px;
    border-right: 1px solid #e2e2e2;
  }

  .group-tools {
    display: flex;
    height: 40px;
  }

  .lead {
    padding: 0 0 0 3px;
  }

  .padded {
    padding: 0 5px;
  }

  .semi-tools {
    display: flex;
    padding: 0 5px 0 1px;
  }

  .caption {
    text-align: center;
    line-height: 8px;
  }

  .tool {
    display: flex;
    flex-direction: column;
    align-items: center;
    justify-content: flex-start;
    line-height: 7px;
  }

  .tool-icon {
    width: 18px;
    height: 18px;
    margin: 4px 0 2px;
    flex-shrink: 0;
  }

  .tool-list {
    display: flex;
    flex-direction: column;
    padding: 3px 10px 0 6px;
    border-left: 1px solid #e2e2e2;
  }

  .tool-list button {
    display: flex;
    align-items: center;
    gap: 2px;
    height: 12px;
  }

  .list-icon {
    width: 12px;
    height: 12px;
  }

  .workspace {
    display: flex;
  }

  .side-tools {
    display: flex;
    flex-direction: column;
    align-items: center;
    width: 20px;
    flex-shrink: 0;
    padding-top: 2px;
  }

  .side-grip {
    width: 12px;
    border-top: 1px dotted #222;
    margin-bottom: 2px;
  }

  .side-block {
    display: flex;
    flex-direction: column;
    padding-bottom: 2px;
    margin-bottom: 3px;
    border-bottom: 1px solid #e2e2e2;
  }

  .side-block:last-child {
    border: 0;
  }

  .side-block button {
    display: flex;
    align-items: center;
    justify-content: center;
    height: 16px;
  }

  .side-icon {
    width: 14px;
    height: 14px;
  }

  .stage {
    flex: 1;
    min-width: 0;
  }

  .scene,
  .ruler {
    display: block;
    width: 100%;
  }

  .ruler text {
    font-family: var(--ui);
    font-size: 7px;
    text-anchor: middle;
    fill: #333;
  }

  .pages {
    display: flex;
    flex-direction: column;
    width: 174px;
    padding-left: 5px;
    flex-shrink: 0;
    overflow: hidden;
    background: #fcfcfc;
  }

  .page-head {
    display: flex;
    align-items: center;
    gap: 3px;
    height: 14px;
    padding: 0 1px 0 2px;
  }

  .arrow {
    width: 0;
    margin-right: 2px;
    border-left: 4px solid #000;
    border-top: 3px solid transparent;
    border-bottom: 3px solid transparent;
  }

  .arrow.open {
    margin-right: 0;
    border-top: 4px solid #000;
    border-left: 3px solid transparent;
    border-right: 3px solid transparent;
    border-bottom: 0;
  }

  .grip {
    flex: 1;
    height: 3px;
    background: repeating-conic-gradient(#aaa 0 25%, #fff 0 50%) 0 0 / 2px 2px;
  }

  .dot {
    width: 3px;
    height: 3px;
    margin-left: 4px;
    background: #222;
  }

  .page-tabs {
    display: flex;
    gap: 1px;
    height: 12px;
    border-bottom: 1px solid #ddd;
  }

  .page-tabs button {
    padding: 0 6px;
  }

  .page-tabs .current {
    min-width: 32px;
    padding: 0 2px;
    border: 1px solid #bbb;
    border-bottom: 0;
    background: #fff;
  }

  .tab-scroll {
    width: 14px;
    height: 12px;
    margin-left: auto;
  }

  .part-total {
    padding-right: 3px;
    line-height: 8px;
    text-align: right;
  }

  .part-list {
    flex: 1;
    border: 1px solid #888;
    border-width: 1px 0 1px 1px;
    background: #fff;
  }

  table {
    width: 100%;
    border-collapse: collapse;
    table-layout: fixed;
  }

  th,
  td {
    height: 10px;
    padding: 0;
    overflow: hidden;
    font-weight: normal;
    text-align: center;
    white-space: nowrap;
  }

  th {
    border-right: 1px solid #eee;
  }

  .narrow {
    width: 12px;
  }

  .wide {
    width: 40px;
  }

  .info {
    width: 24px;
  }

  .cell-icon {
    display: block;
    width: 8px;
    height: 8px;
    margin: auto;
  }

  .scene-tools {
    display: flex;
    align-items: center;
    justify-content: space-between;
    height: 18px;
    padding: 0 1px;
  }

  .scene-tools button {
    display: flex;
    padding-right: 1px;
  }

  .scene-tools .rule {
    padding-right: 4px;
    border-right: 1px solid #ddd;
  }

  .scene-icon {
    width: 14px;
    height: 14px;
  }

  .status {
    height: 6px;
    overflow: hidden;
    padding-left: 2px;
    background: #3193ec;
    color: #a9d5ff;
  }

  /* Fix Wizard dialog */

  .wizard {
    display: flex;
    flex-direction: column;
    min-width: 0;
    overflow: hidden;
    border-radius: 12px 12px 2px 2px;
    background: #f0f0f0;
    font-size: 20px;
    line-height: 26px;
  }

  .wizard-title {
    display: flex;
    align-items: center;
    height: 59px;
    padding: 0 33px 0 18px;
    background: #f0f4fb;
  }

  .plus {
    width: 28px;
    height: 28px;
  }

  h1 {
    flex: 1;
    margin: 0 0 0 12px;
    font-size: 23px;
    font-weight: normal;
  }

  .wizard-controls {
    display: flex;
    gap: 68px;
  }

  .wizard-controls svg {
    display: block;
    width: 22px;
    height: 22px;
  }

  .wizard-body {
    display: flex;
    flex: 1;
    padding-left: 8px;
  }

  .wizard-nav {
    box-sizing: border-box;
    width: 240px;
    margin-top: 9px;
    padding: 2px 4px 0 2px;
    border: 2px solid #8c8c90;
    border-bottom: 0;
    background: #fafafa;
  }

  .nav-inner {
    height: 100%;
    padding-right: 5px;
    border-left: 2px solid #6c6c72;
    border-top: 2px solid #6c6c72;
    background: #fff;
  }

  .nav-inner button {
    display: flex;
    align-items: center;
    gap: 2px;
    width: 100%;
    height: 42px;
    padding-left: 8px;
    font-size: 22px;
  }

  .nav-inner svg {
    width: 38px;
    height: 40px;
    flex-shrink: 0;
  }

  .nav-inner span {
    flex: 1;
    padding-left: 4px;
    line-height: 40px;
    text-align: left;
  }

  .nav-inner .selected span {
    background: #f0f0f0;
  }

  hr {
    height: 2px;
    margin: 19px 0;
    border: 0;
    background: #8a8a8a;
  }

  .wizard-main {
    flex: 1;
    min-width: 0;
    padding: 10px 10px 0 17px;
  }

  .part-row {
    display: flex;
    align-items: flex-start;
    padding-left: 8px;
    line-height: 24px;
  }

  .part-row label {
    width: 145px;
  }

  .select-wrap {
    position: relative;
    flex: 1;
  }

  select {
    box-sizing: border-box;
    width: 100%;
    height: 41px;
    padding: 0 5px;
    border: 2px solid #ccc;
    border-radius: 3px;
    background: #fff;
    font-size: 21px;
    appearance: none;
  }

  .select-wrap svg {
    position: absolute;
    right: 9px;
    top: 16px;
    width: 18px;
    height: 10px;
  }

  .next {
    width: 85px;
    height: 42px;
    margin: 3px 0 0 11px;
    border: 2px solid #e8e8e8;
    border-radius: 6px;
    background: #f9f9f9;
    color: #8c8c8c;
  }

  .panel {
    margin: 18px 4px 0 0;
    padding: 40px 18px 20px;
    border: 2px solid #b4b4b4;
    border-radius: 8px;
    background: linear-gradient(#fff, #efefef);
  }

  fieldset {
    min-width: 0;
    margin: 0;
    padding: 0;
    border: 2px solid #dedede;
  }

  legend {
    margin-left: -6px;
    padding: 0 4px;
    line-height: 24px;
  }

  .advice {
    display: flex;
    height: 146px;
    box-sizing: border-box;
    padding: 14px 18px 0 17px;
  }

  .advice p {
    flex: 1;
    margin: 0 0 0 4px;
    font-size: 21px;
    white-space: nowrap;
  }

  .scroll {
    display: flex;
    flex-direction: column;
    align-items: center;
    justify-content: space-between;
    box-sizing: border-box;
    width: 31px;
    height: 91px;
    padding: 11px 0 9px;
    background: #efefef;
  }

  .scroll svg {
    width: 16px;
    height: 14px;
  }

  .diagnostics {
    margin-top: 12px;
    padding: 16px 18px 17px 17px;
  }

  input[type='checkbox'] {
    box-sizing: border-box;
    display: grid;
    place-items: center;
    width: 26px;
    height: 26px;
    margin: 0;
    border: 2px solid #777;
    border-radius: 6px;
    background: #f6f6f6;
    appearance: none;
    flex-shrink: 0;
  }

  input[type='checkbox']:checked {
    border-color: #005fb8;
    background: #005fb8;
  }

  input[type='checkbox']:checked::after {
    content: '';
    width: 4px;
    height: 10px;
    border: solid #d6e8f8;
    border-width: 0 1px 1px 0;
    transform: rotate(42deg);
  }

  .full {
    display: flex;
    align-items: center;
    gap: 6px;
  }

  .checks {
    display: flex;
    flex-direction: column;
    padding: 25px 0 0 40px;
  }

  .check {
    display: flex;
    align-items: center;
    height: 40px;
  }

  .nested {
    padding-left: 40px;
  }

  .no-box {
    width: 26px;
  }

  .check svg {
    width: 32px;
    height: 34px;
    margin: 0 8px 0 13px;
  }

  .check b {
    width: 88px;
  }

  .update {
    display: block;
    box-sizing: border-box;
    width: 197px;
    height: 48px;
    margin: 19px 0 0 auto;
    padding: 4px;
    border: 2px solid #1f74b8;
    border-radius: 6px;
    background: #fdfdfd;
  }

  .focus {
    display: flex;
    align-items: center;
    box-sizing: border-box;
    height: 100%;
    border: 2px dotted #222;
  }

  .focus svg {
    width: 38px;
    height: 38px;
  }

  .focus span {
    flex: 1;
    text-align: center;
  }
</style>
